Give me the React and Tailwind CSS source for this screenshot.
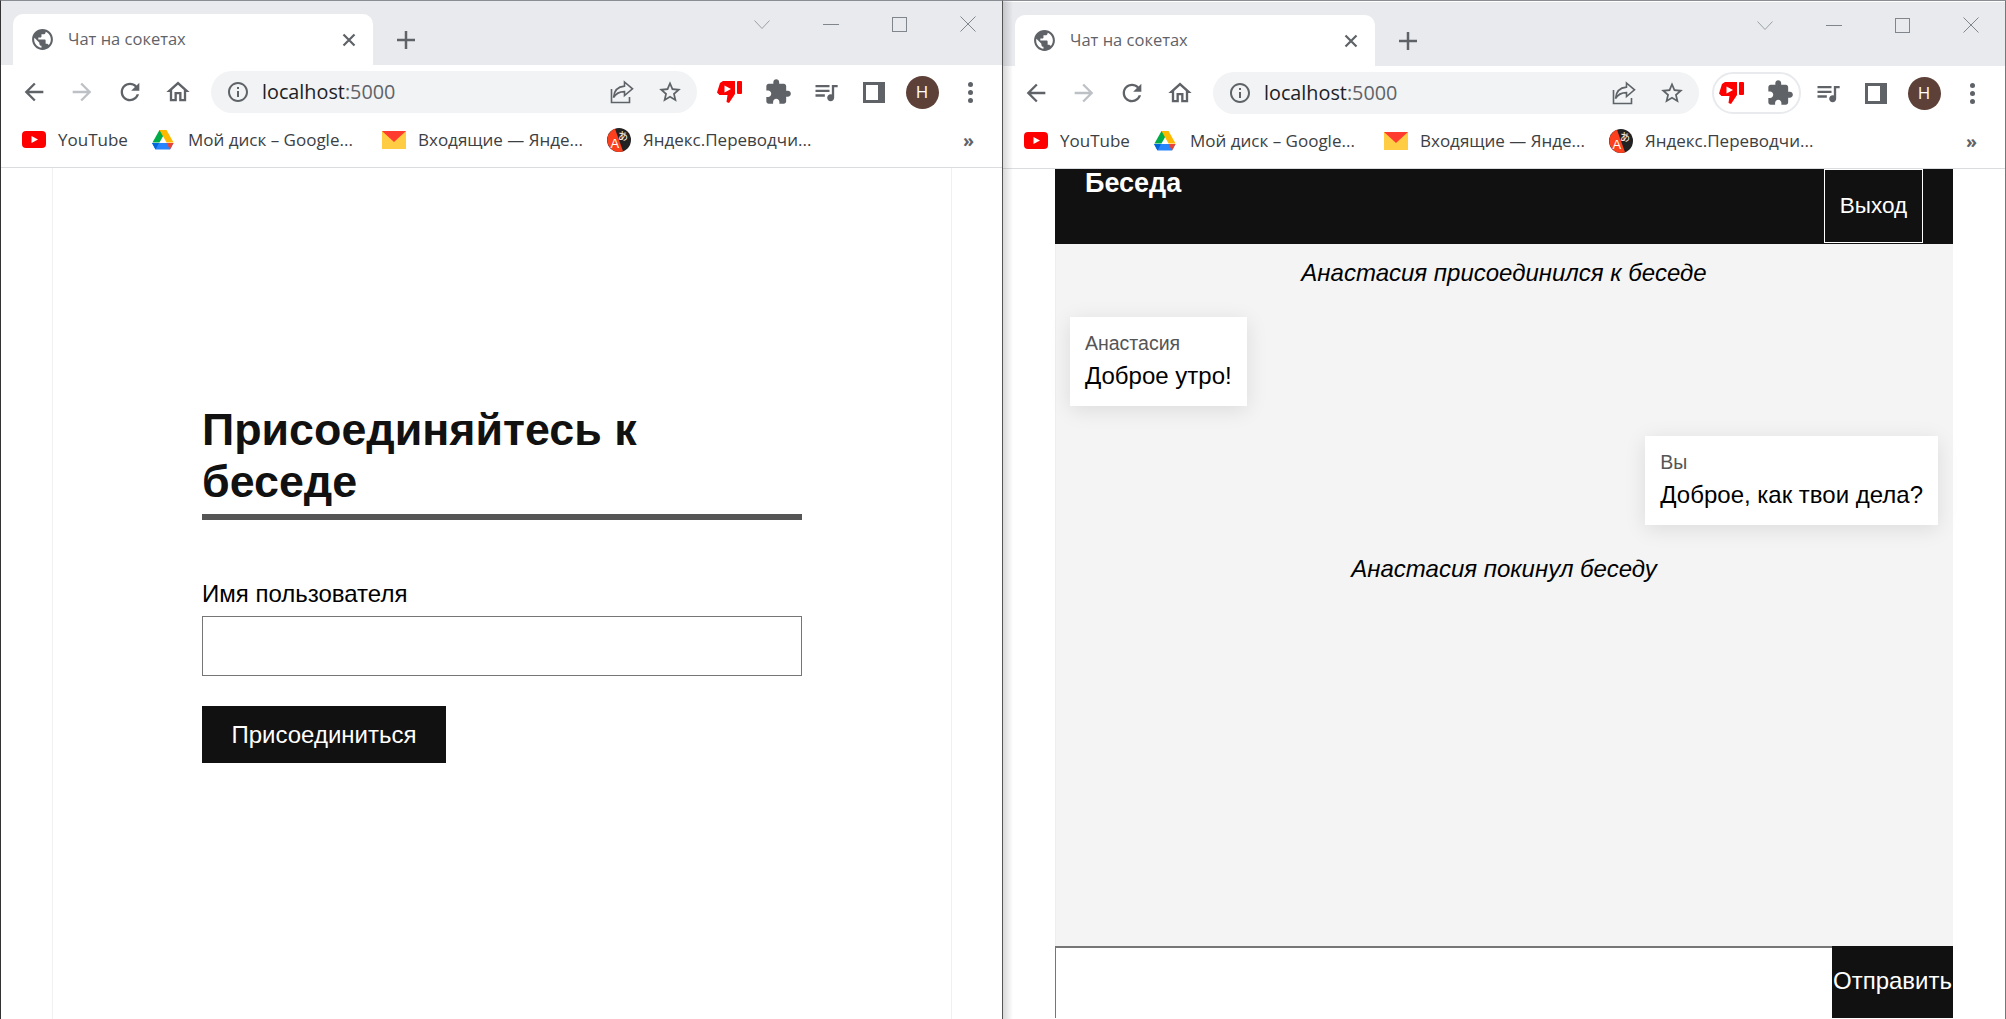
import React from 'react';

const uiFont = { fontFamily: '"Open Sans", "Noto Sans", sans-serif' };

const paths = {
  globe: 'M12 2C6.48 2 2 6.48 2 12s4.48 10 10 10 10-4.48 10-10S17.52 2 12 2zm-1 17.93c-3.95-.49-7-3.85-7-7.93 0-.62.08-1.21.21-1.79L9 15v1c0 1.1.9 2 2 2v1.93zm6.9-2.54c-.26-.81-1-1.39-1.9-1.39h-1v-3c0-.55-.45-1-1-1H8v-2h2c.55 0 1-.45 1-1V7h2c1.1 0 2-.9 2-2v-.41c2.93 1.19 5 4.06 5 7.41 0 2.08-.8 3.97-2.1 5.39z',
  back: 'M20 11H7.83l5.59-5.59L12 4l-8 8 8 8 1.41-1.41L7.83 13H20v-2z',
  forward: 'M4 11h12.17l-5.59-5.59L12 4l8 8-8 8-1.41-1.41L16.17 13H4v-2z',
  reload: 'M17.65 6.35C16.2 4.9 14.21 4 12 4c-4.42 0-7.99 3.58-7.99 8s3.57 8 7.99 8c3.73 0 6.84-2.55 7.73-6h-2.08c-.82 2.33-3.04 4-5.65 4-3.31 0-6-2.69-6-6s2.69-6 6-6c1.66 0 3.14.69 4.22 1.78L13 11h7V4l-2.35 2.35z',
  home: 'M12 5.69l5 4.5V18h-2v-6H9v6H7v-7.81l5-4.5M12 3L2 12h3v8h6v-6h2v6h6v-8h3L12 3z',
  info: 'M11 7h2v2h-2zm0 4h2v6h-2zm1-9C6.48 2 2 6.48 2 12s4.48 10 10 10 10-4.48 10-10S17.52 2 12 2zm0 18c-4.41 0-8-3.59-8-8s3.59-8 8-8 8 3.59 8 8-3.59 8-8 8z',
  star: 'M22 9.24l-7.19-.62L12 2 9.19 8.63 2 9.24l5.46 4.73L5.82 21 12 17.27 18.18 21l-1.63-7.03L22 9.24zM12 15.4l-3.76 2.27 1-4.28-3.32-2.88 4.38-.38L12 6.1l1.71 4.04 4.38.38-3.32 2.88 1 4.28L12 15.4z',
  puzzle: 'M20.5 11H19V7c0-1.1-.9-2-2-2h-4V3.5C13 2.12 11.88 1 10.5 1S8 2.12 8 3.5V5H4c-1.1 0-1.99.9-1.99 2v3.8H3.5c1.49 0 2.7 1.21 2.7 2.7s-1.21 2.7-2.7 2.7H2V20c0 1.1.9 2 2 2h3.8v-1.5c0-1.49 1.21-2.7 2.7-2.7 1.49 0 2.7 1.21 2.7 2.7V22H17c1.1 0 2-.9 2-2v-4h1.5c1.38 0 2.5-1.12 2.5-2.5S21.88 11 20.5 11z',
  queue: 'M15 6H3v2h12V6zm0 4H3v2h12v-2zM3 16h8v-2H3v2zM17 6v8.18c-.31-.11-.65-.18-1-.18-1.66 0-3 1.34-3 3s1.34 3 3 3 3-1.34 3-3V8h3V6h-5z',
};

const Icon = ({ d, size = 28, color = '#5f6368' }) => (
  <svg width={size} height={size} viewBox="0 0 24 24" fill={color}>
    <path d={d} />
  </svg>
);

const ToolButton = ({ children }) => (
  <div className="w-12 h-[42px] flex items-center justify-center shrink-0">{children}</div>
);

const ShareIcon = () => (
  <svg width="26" height="26" viewBox="0 0 26 26" fill="none" stroke="#5f6368" strokeWidth="1.6">
    <path d="M2.5 10v13.5h18V18" />
    <path d="M15.5 3l8 6.8-8 6.8v-4c-5 0-8.500 1.500-11 6 .5-7 4.500-11 11-11.500z" />
  </svg>
);

const DislikeIcon = () => (
  <svg width="26" height="24" viewBox="0 0 26 24">
    <path d="M6 1h12v13l-6 9-2.500-1 1-7H2.500L0 12.500 3 3z" fill="#ff0000" />
    <path d="M7.500 5.500l6.500 3.500-6.500 3.500z" fill="#fff" />
    <rect x="20" y="1" width="5" height="13" rx="1" fill="#ff0000" />
  </svg>
);

const SidePanelIcon = () => (
  <svg width="22" height="21" viewBox="0 0 22 21">
    <rect width="22" height="21" fill="#5f6368" />
    <rect x="3" y="3" width="12" height="15" fill="#fff" />
  </svg>
);

const YouTubeIcon = () => (
  <svg width="24" height="17" viewBox="0 0 24 17">
    <rect width="24" height="17" rx="4" fill="#ff0000" />
    <path d="M9.500 5l6.500 3.500-6.500 3.500z" fill="#fff" />
  </svg>
);

const DriveIcon = () => (
  <svg width="22" height="20" viewBox="0 0 22 20">
    <path d="M7.500 0h7l-7 12.500H0.500z" fill="#00ac47" />
    <path d="M7.500 0h7l7 12.500h-7z" fill="#ffba00" />
    <path d="M0 13h21.500l-3.500 6.500H3.500z" fill="#2684fc" />
    <path d="M14.500 13h7L18 19.500z" fill="#ea4335" />
    <path d="M0 13h7l-3.500 6.500z" fill="#0066da" />
  </svg>
);

const MailIcon = () => (
  <svg width="24" height="18" viewBox="0 0 24 18">
    <rect width="24" height="18" fill="#ffcc44" />
    <path d="M0 0h24L12 11z" fill="#ff3b30" />
  </svg>
);

const TranslateIcon = () => (
  <svg width="24" height="24" viewBox="0 0 24 24">
    <circle cx="12" cy="12" r="12" fill="#222" />
    <path d="M8 .69A12 12 0 0 0 16 23.31z" fill="#fc3f1d" />
    <text x="3.500" y="20" fontSize="13" fill="#fff" fontFamily="Liberation Sans, sans-serif">A</text>
    <text x="11" y="12" fontSize="10" fill="#fff" fontFamily="Noto Sans CJK SC, sans-serif">あ</text>
  </svg>
);

const BrowserChrome = ({ grouped }) => (
  <div style={uiFont} className="shrink-0">
    <div className="h-[64px] bg-[#e8eaed] flex items-end pl-3 relative">
      <div className="w-[360px] h-[51px] bg-white rounded-t-[10px] flex items-center pl-[17px] pr-[17px]">
        <Icon d={paths.globe} size={25} />
        <span className="ml-[13px] text-[16.500px] text-[#5f6368]">Чат на сокетах</span>
        <svg className="ml-auto" width="14" height="14" viewBox="0 0 14 14" stroke="#5f6368" strokeWidth="2.200">
          <path d="M1.500 1.500l11 11M12.500 1.500l-11 11" />
        </svg>
      </div>
      <div className="ml-[24px] h-[51px] flex items-center">
        <svg width="18" height="18" viewBox="0 0 18 18" stroke="#5f6368" strokeWidth="2.500">
          <path d="M9 0v18M0 9h18" />
        </svg>
      </div>
      <div className="ml-auto self-start h-[46px] flex items-center gap-[53px] pr-[26px]">
        <svg width="16" height="9" viewBox="0 0 16 9" fill="none" stroke="#9aa0a6">
          <path d="M.5.500L8 8.500 15.500.500" />
        </svg>
        <svg width="16" height="1" viewBox="0 0 16 1" stroke="#80868b">
          <path d="M0 .5h16" />
        </svg>
        <svg width="15" height="15" viewBox="0 0 15 15" fill="none" stroke="#80868b">
          <rect x=".5" y=".5" width="14" height="14" />
        </svg>
        <svg width="16" height="16" viewBox="0 0 16 16" stroke="#80868b">
          <path d="M.5.500l15 15M15.500.500l-15 15" />
        </svg>
      </div>
    </div>

    <div className="h-[51px] bg-white flex pt-[6px] pl-[9px]">
      <ToolButton><Icon d={paths.back} /></ToolButton>
      <ToolButton><Icon d={paths.forward} color="#bdc1c6" /></ToolButton>
      <ToolButton><Icon d={paths.reload} /></ToolButton>
      <ToolButton><Icon d={paths.home} /></ToolButton>
      <div className="ml-[9px] w-[486px] h-[42px] bg-[#f1f3f4] rounded-full flex items-center pl-[15px] shrink-0">
        <Icon d={paths.info} size={24} />
        <span className="ml-[12px] text-[19.800px] text-[#202124]">
          localhost<span className="text-[#5f6368]">:5000</span>
        </span>
        <div className="ml-auto flex pr-[3px]">
          <ToolButton><ShareIcon /></ToolButton>
          <ToolButton><Icon d={paths.star} size={26} /></ToolButton>
        </div>
      </div>
      <div className="ml-[9px] w-24 h-[42px] flex relative shrink-0">
        {grouped && <div className="absolute left-[4px] w-[89px] h-[42px] rounded-full border-2 border-[#e8eaed]" />}
        <ToolButton><DislikeIcon /></ToolButton>
        <ToolButton><Icon d={paths.puzzle} /></ToolButton>
      </div>
      <ToolButton><Icon d={paths.queue} /></ToolButton>
      <ToolButton><SidePanelIcon /></ToolButton>
      <ToolButton>
        <div className="w-[33px] h-[33px] rounded-full bg-[#5d4037] text-white text-[17px] flex items-center justify-center">H</div>
      </ToolButton>
      <ToolButton>
        <div className="flex flex-col gap-[3px]">
          <div className="w-[5px] h-[5px] rounded-full bg-[#5f6368]" />
          <div className="w-[5px] h-[5px] rounded-full bg-[#5f6368]" />
          <div className="w-[5px] h-[5px] rounded-full bg-[#5f6368]" />
        </div>
      </ToolButton>
    </div>

    <div className="h-[52px] bg-white border-b border-[#dadce0] flex items-center pl-[21px] pb-[4px] text-[17px] text-[#3c4043]">
      <div className="w-[130px] flex items-center gap-3 shrink-0"><YouTubeIcon /><span>YouTube</span></div>
      <div className="w-[230px] flex items-center gap-[14px] shrink-0"><DriveIcon /><span>Мой диск – Google...</span></div>
      <div className="w-[225px] flex items-center gap-3 shrink-0"><MailIcon /><span>Входящие — Янде...</span></div>
      <div className="flex items-center gap-3 shrink-0"><TranslateIcon /><span>Яндекс.Переводчи...</span></div>
      <span className="ml-auto mr-[28px] text-[18px] leading-none font-bold text-[#5f6368]">»</span>
    </div>
  </div>
);

const JoinPage = () => (
  <div className="flex-1 min-h-0 bg-white pl-[51px]">
    <div className="w-[900px] h-full border-x border-[#f0f0f0] px-[149px] pt-[235px] text-[#111]">
      <h1 className="text-[44.800px] leading-[52px] font-bold pb-[7px] border-b-[6px] border-[#555]">Присоединяйтесь к беседе</h1>
      <label className="block mt-[62px] text-[24px] leading-6 text-black">Имя пользователя</label>
      <input type="text" className="block mt-[10px] w-full h-[60px] border border-[#767676] bg-white" />
      <button className="mt-[30px] w-[244px] h-[57px] bg-[#111] text-white text-[24px]">Присоединиться</button>
    </div>
  </div>
);

const Message = ({ name, text, mine }) => (
  <div className={mine ? 'flex justify-end mt-[30px]' : 'flex mt-[32px]'}>
    <div className="bg-white shadow-[0_4px_20px_rgba(0,0,0,0.1)] pl-[15px] pr-[15px] pt-[14px] pb-[17px]">
      <div className="text-[19.500px] leading-6 text-[#555] mb-[9px]">{name}</div>
      <div className="text-[24px] leading-6 text-black pb-px">{text}</div>
    </div>
  </div>
);

const ChatPage = () => (
  <div className="flex-1 min-h-0 bg-white pl-[52px]">
    <div className="w-[898px] h-full flex flex-col">
      <header className="h-[75px] bg-[#111] text-white flex justify-between items-start pl-[30px] pr-[30px] shrink-0">
        <h2 className="text-[27px] leading-[28px] font-bold">Беседа</h2>
        <button className="w-[99px] h-[74px] border border-white text-[22.500px]">Выход</button>
      </header>
      <div className="h-[702px] shrink-0 bg-[#f4f4f4] border-l border-[#eee] pt-[17px] pl-[14px] pr-[15px] text-black">
        <p className="text-[24px] leading-6 italic text-center">Анастасия присоединился к беседе</p>
        <Message name="Анастасия" text="Доброе утро!" />
        <Message name="Вы" text="Доброе, как твои дела?" mine />
        <p className="mt-[32px] text-[24px] leading-6 italic text-center">Анастасия покинул беседу</p>
      </div>
      <form className="flex h-[72px] shrink-0">
        <input type="text" className="flex-1 min-w-0 border-t-2 border-l border-[#767676] bg-white" />
        <button type="button" className="w-[121px] h-full bg-[#111] text-white text-[24px] pb-[2px]">Отправить</button>
      </form>
    </div>
  </div>
);

const BrowserWindow = ({ className, grouped, children }) => (
  <div className={`flex flex-col overflow-hidden relative ${className}`}>
    <BrowserChrome grouped={grouped} />
    {children}
  </div>
);

export default function App() {
  return (
    <div className="flex h-[1019px] w-[2006px] overflow-hidden bg-white" style={{ fontFamily: '"Liberation Sans", Arial, sans-serif' }}>
      <BrowserWindow className="w-[1002px] border-l border-t border-l-[#333] border-t-[#8a8d93]">
        <JoinPage />
      </BrowserWindow>
      <BrowserWindow grouped className="w-[1004px] pt-px border-l border-r border-t border-l-[#555] border-r-[#777] border-t-[#8a8d93]">
        <div className="absolute left-0 top-0 bottom-0 w-[10px] bg-gradient-to-r from-black/15 to-transparent" />
        <ChatPage />
      </BrowserWindow>
    </div>
  );
}
